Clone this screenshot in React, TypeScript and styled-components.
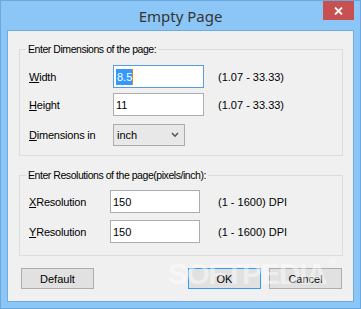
import styled, { createGlobalStyle } from "styled-components";

const GlobalStyle = createGlobalStyle`
  html, body {
    margin: 0;
    padding: 0;
    overflow: hidden;
    background: #ffffff;
  }
`;

const Window = styled.div`
  width: 361px;
  height: 309px;
  box-sizing: border-box;
  background: #8bc6f6;
  border: 1px solid #6aa8de;
  display: flex;
  flex-direction: column;
  font-family: "Liberation Sans", Arial, sans-serif;
  font-size: 11px;
  color: #000;
`;

const TitleBar = styled.div`
  position: relative;
  height: 29px;
  display: flex;
  align-items: center;
  justify-content: center;
`;

const Title = styled.div`
  font-family: "Noto Sans", "Open Sans", sans-serif;
  font-size: 15px;
  color: #353535;
`;

const CloseButton = styled.div`
  position: absolute;
  top: 0;
  right: 6px;
  width: 31px;
  height: 19px;
  background: #c75050;
  display: flex;
  align-items: center;
  justify-content: center;
`;

const Client = styled.div`
  position: relative;
  flex: 1;
  margin: 0 6px 6px;
  border: 1px solid #71aadf;
  background: #f0f0f0;
  padding: 18px 10px 0 11px;
  display: flex;
  flex-direction: column;
  overflow: hidden;
`;

const Group = styled.div<{ $top: number; $bottom: number; $mt?: number }>`
  position: relative;
  border: 1px solid #dcdcdc;
  margin-top: ${(p) => p.$mt ?? 0}px;
  padding: ${(p) => p.$top}px 8px ${(p) => p.$bottom}px 9px;
  display: flex;
  flex-direction: column;
`;

const Legend = styled.div`
  position: absolute;
  top: -8px;
  left: 6px;
  padding: 0 2px;
  background: #f0f0f0;
  line-height: 15px;
  font-size: 10.5px;
  letter-spacing: -0.45px;
`;

const Row = styled.div<{ $gap?: number }>`
  display: flex;
  align-items: center;
  margin-top: ${(p) => p.$gap ?? 0}px;
`;

const Label = styled.div<{ $w: number }>`
  width: ${(p) => p.$w}px;
  flex: none;
  letter-spacing: -0.2px;
`;

const Input = styled.div<{ $w: number; $focus?: boolean }>`
  width: ${(p) => p.$w}px;
  height: 23px;
  box-sizing: border-box;
  border: 1px solid ${(p) => (p.$focus ? "#569de5" : "#abadb3")};
  background: #fff;
  display: flex;
  align-items: center;
  padding-left: 2px;
  flex: none;
`;

const Selected = styled.span`
  background: #3399ff;
  color: #fff;
  padding: 2px 0 2px 1px;
  border-right: 1px solid #d08a2c;
`;

const Range = styled.div<{ $ml: number }>`
  margin-left: ${(p) => p.$ml}px;
`;

const Select = styled.div`
  width: 72px;
  height: 22px;
  box-sizing: border-box;
  border: 1px solid #acacac;
  background: #e8e8e8;
  display: flex;
  align-items: center;
  justify-content: space-between;
  padding: 0 5px 0 3px;
`;

const ButtonRow = styled.div`
  display: flex;
  justify-content: space-between;
  margin-top: 12px;
  padding: 0 1px 0 2px;
`;

const RightButtons = styled.div`
  display: flex;
  gap: 8px;
`;

const Button = styled.div<{ $default?: boolean }>`
  position: relative;
  z-index: 0;
  width: 73px;
  height: 21px;
  box-sizing: border-box;
  border: 1px solid ${(p) => (p.$default ? "#3399ff" : "#adadad")};
  background: #e1e1e1;
  display: flex;
  align-items: center;
  justify-content: center;
`;

const Watermark = styled.div`
  position: absolute;
  left: 160px;
  top: 226px;
  z-index: 1;
  font-family: "Liberation Sans", Arial, sans-serif;
  font-weight: bold;
  font-size: 30px;
  letter-spacing: -1.5px;
  color: rgba(255, 255, 255, 0.45);
  pointer-events: none;
  sup {
    font-size: 10px;
    vertical-align: top;
    margin-left: 3px;
  }
`;

export default function App() {
  return (
    <>
      <GlobalStyle />
      <Window>
        <TitleBar>
          <Title>Empty Page</Title>
          <CloseButton>
            <svg width="9" height="8" viewBox="0 0 9 8">
              <path d="M1 0.5 L8 7.5 M8 0.5 L1 7.5" stroke="#fff" strokeWidth="1.8" />
            </svg>
          </CloseButton>
        </TitleBar>
        <Client>
          <Group $top={15} $bottom={9}>
            <Legend>Enter Dimensions of the page:</Legend>
            <Row>
              <Label $w={84}><u>W</u>idth</Label>
              <Input $w={91} $focus>
                <Selected>8.5</Selected>
              </Input>
              <Range $ml={14}>(1.07 - 33.33)</Range>
            </Row>
            <Row $gap={5}>
              <Label $w={84}><u>H</u>eight</Label>
              <Input $w={91}>11</Input>
              <Range $ml={14}>(1.07 - 33.33)</Range>
            </Row>
            <Row $gap={8}>
              <Label $w={84}><u>D</u>imensions in</Label>
              <Select>
                <span>inch</span>
                <svg width="8" height="6" viewBox="0 0 8 6">
                  <path d="M1 1 L4 4.2 L7 1" stroke="#555" strokeWidth="1.6" fill="none" />
                </svg>
              </Select>
            </Row>
          </Group>
          <Group $top={14} $bottom={12} $mt={19}>
            <Legend>Enter Resolutions of the page(pixels/inch):</Legend>
            <Row>
              <Label $w={81}><u>X</u>Resolution</Label>
              <Input $w={90}>150</Input>
              <Range $ml={18}>(1 - 1600) DPI</Range>
            </Row>
            <Row $gap={7}>
              <Label $w={81}><u>Y</u>Resolution</Label>
              <Input $w={90}>150</Input>
              <Range $ml={18}>(1 - 1600) DPI</Range>
            </Row>
          </Group>
          <ButtonRow>
            <Button>Default</Button>
            <RightButtons>
              <Button $default>OK</Button>
              <Button>Cancel</Button>
            </RightButtons>
          </ButtonRow>
          <Watermark>
            SOFTPEDIA<sup>®</sup>
          </Watermark>
        </Client>
      </Window>
    </>
  );
}
